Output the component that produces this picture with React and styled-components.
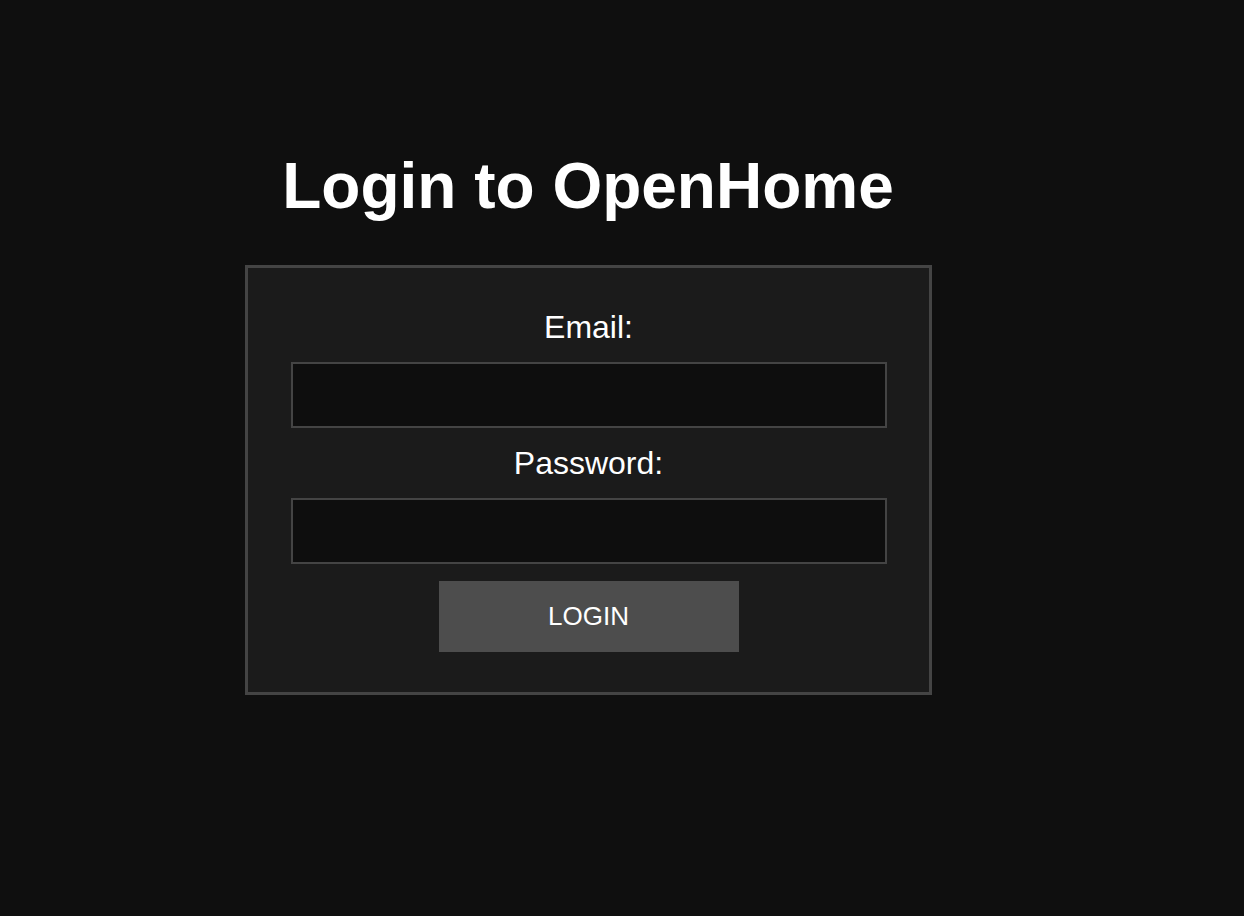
import React from "react";
import styled, { createGlobalStyle } from "styled-components";

const GlobalStyle = createGlobalStyle`
  html, body {
    margin: 0;
    padding: 0;
    background: #0f0f0f;
    font-family: "Liberation Sans", Arial, sans-serif;
    color: #fff;
  }
`;

const Page = styled.main`
  min-height: 100vh;
  box-sizing: border-box;
  padding: 150px 68px 0 0;
  display: flex;
  flex-direction: column;
  align-items: center;
  gap: 43px;
`;

const Title = styled.h1`
  margin: 0;
  font-size: 64px;
  line-height: 72px;
  font-weight: 700;
`;

const Form = styled.form`
  width: 687px;
  box-sizing: border-box;
  padding: 41px 42px 40px 43px;
  background: #1b1b1b;
  border: 3px solid #444;
  display: flex;
  flex-direction: column;
  align-items: center;
  gap: 17px;
`;

const Label = styled.label`
  font-size: 32px;
  line-height: 36px;
  color: #fff;
`;

const Input = styled.input`
  width: 596px;
  height: 66px;
  box-sizing: border-box;
  background: #0e0e0e;
  border: 2px solid #444;
  color: #fff;
  font-size: 24px;
  padding: 0 12px;
  outline: none;
`;

const Button = styled.button`
  width: 300px;
  height: 71px;
  border: none;
  background: #4d4d4d;
  color: #fff;
  font-family: inherit;
  font-size: 26px;
  cursor: pointer;
`;

function App() {
  const handleSubmit = (event) => {
    event.preventDefault();
  };
  return (
    <>
      <GlobalStyle />
      <Page>
        <Title>Login to OpenHome</Title>
        <Form onSubmit={(event) => handleSubmit(event)}>
          <Label htmlFor="email">Email:</Label>
          <Input id="email" type="email" />
          <Label htmlFor="password">Password:</Label>
          <Input id="password" type="password" />
          <Button type="submit">LOGIN</Button>
        </Form>
      </Page>
    </>
  );
}

export default App;
